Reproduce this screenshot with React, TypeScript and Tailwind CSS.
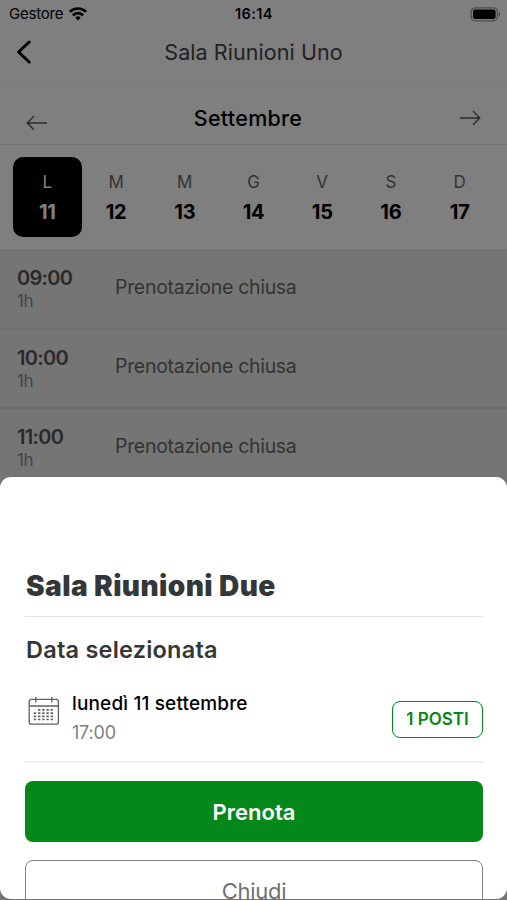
import React from 'react';
import clsx from 'clsx';

interface Day {
  label: string;
  date: number;
}

interface Slot {
  time: string;
  duration: string;
  status: string;
}

const days: Day[] = [
  { label: 'L', date: 11 },
  { label: 'M', date: 12 },
  { label: 'M', date: 13 },
  { label: 'G', date: 14 },
  { label: 'V', date: 15 },
  { label: 'S', date: 16 },
  { label: 'D', date: 17 },
];

const slots: Slot[] = [
  { time: '09:00', duration: '1h', status: 'Prenotazione chiusa' },
  { time: '10:00', duration: '1h', status: 'Prenotazione chiusa' },
  { time: '11:00', duration: '1h', status: 'Prenotazione chiusa' },
];

const WifiIcon = () => (
  <svg width="18" height="14" viewBox="0 0 18 14" fill="none" stroke="#000" strokeWidth="2.7">
    <path d="M.9 4.8a11.6 11.6 0 0 1 16.2 0" />
    <path d="M3.8 8.2a7.4 7.4 0 0 1 10.4 0" />
    <path d="M6.3 10.7a3.8 3.8 0 0 1 5.4 0L9 13.4z" fill="#000" stroke="none" />
  </svg>
);

const BatteryIcon = () => (
  <svg width="31" height="15" viewBox="0 0 31 15" fill="none">
    <rect x="1.2" y="0.8" width="26.2" height="13" rx="4" stroke="#000" strokeOpacity="0.4" strokeWidth="1.3" />
    <rect x="3" y="2.6" width="22.6" height="9.4" rx="2.2" fill="#000" />
    <path d="M28.8 5v4.6c1.5-.5 1.5-4.1 0-4.6z" fill="#000" fillOpacity="0.5" />
  </svg>
);

const ArrowIcon = ({ className }: { className?: string }) => (
  <svg className={className} width="22" height="16" viewBox="0 0 22 16" fill="none" stroke="#555" strokeWidth="1.3">
    <path d="M21 8H1.2M8 1L1.2 8L8 15" />
  </svg>
);

const CalendarIcon = () => (
  <svg width="32" height="28" viewBox="0 0 32 28" fill="none" stroke="#606060" strokeWidth="1.3">
    <rect x="1.2" y="2.4" width="29.2" height="24.8" rx="2.2" />
    <path d="M1.2 9h29.2M7.8 0v5.6M23.8 0v5.6" />
    <path d="M10 12.9h16.8M5.8 16.1h21M5.8 19.3h21M5.8 22.5h21" strokeWidth="1.7" strokeDasharray="2.4 1.8" />
  </svg>
);

const StatusBar = () => (
  <div className="grid h-7 grid-cols-3 items-center pl-[9px] pr-[6px]">
    <div className="flex items-center gap-[6px] text-[15px] tracking-[-0.2px]">
      Gestore
      <WifiIcon />
    </div>
    <div className="pr-[2px] text-center text-[14.5px] font-semibold tracking-[0.4px]">16:14</div>
    <div className="flex justify-end">
      <BatteryIcon />
    </div>
  </div>
);

const DayCell = ({ day, selected }: { day: Day; selected: boolean }) => (
  <div
    className={clsx(
      'flex h-20 w-[69px] flex-col items-center rounded-[10px] pt-[14px]',
      selected ? 'bg-black text-white' : 'text-black',
    )}
  >
    <span className={clsx('text-[17px] leading-[23px]', !selected && 'text-[#666]')}>{day.label}</span>
    <span className="mt-[5px] text-[20px] leading-[26px] font-bold tracking-[-0.2px]">{day.date}</span>
  </div>
);

const SlotRow = ({ slot }: { slot: Slot }) => (
  <div className="flex h-[79.5px] border-b-2 border-[#dcdcdc] bg-[#ebebeb] pl-[17px]">
    <div className="w-[98px] pt-[16px]">
      <div className="text-[20px] leading-6 font-semibold tracking-[-0.7px] text-[#555]">{slot.time}</div>
      <div className="text-[17px] leading-[22px] tracking-[-0.3px] text-[#888]">{slot.duration}</div>
    </div>
    <div className="pt-[24.5px] text-[19.5px] leading-6 tracking-[-0.3px] text-[#666]">{slot.status}</div>
  </div>
);

const BookingSheet = () => (
  <div className="absolute inset-x-0 top-[477px] flex h-[422px] flex-col overflow-hidden rounded-[11px] bg-white pl-[25px] pr-[24px] pt-[91px]">
    <h2 className="pl-px text-[28px] leading-9 font-black tracking-[0.42px] text-[#343739]">Sala Riunioni Due</h2>
    <div className="mt-[12px] h-px shrink-0 bg-[#e2e2e2]" />
    <h3 className="mt-[17px] pl-px text-[23.5px] leading-8 font-semibold tracking-[0.22px] text-[#343739]">
      Data selezionata
    </h3>
    <div className="mt-[25px] flex h-[54px] shrink-0">
      <div className="w-[47px] pl-[3px] pt-[6px]">
        <CalendarIcon />
      </div>
      <div className="grow pt-px">
        <div className="text-[19px] leading-6 font-medium tracking-[0.15px] text-black">lunedì 11 settembre</div>
        <div className="mt-[5px] text-[18px] leading-6 tracking-[-0.2px] text-[#808080]">17:00</div>
      </div>
      <div className="mt-[10px] flex h-[37px] w-[91px] items-center justify-center rounded-lg border-[1.5px] border-[#008817] text-[17px] font-semibold text-[#008817]">
        1 POSTI
      </div>
    </div>
    <div className="mt-[16px] h-[2px] shrink-0 bg-[#f0f0f0]" />
    <button className="mt-[18px] h-[61px] shrink-0 rounded-lg bg-[#048819] pt-px text-[22px] font-semibold text-white">
      Prenota
    </button>
    <button className="mt-[18px] h-[62px] shrink-0 rounded-lg border-[1.5px] border-[#808080] pt-px text-[22px] tracking-[-0.3px] text-[#707070]">
      Chiudi
    </button>
  </div>
);

export default function App() {
  const selectedDate = 11;

  return (
    <div className="relative h-[900px] w-[507px] overflow-hidden bg-white font-['Inter',sans-serif]">
      <StatusBar />
      <header className="relative flex h-[58px] justify-center border-b border-[#f4f4f4] pt-[8px]">
        <svg
          className="absolute left-4 top-[12px]"
          width="16"
          height="24"
          viewBox="0 0 16 24"
          fill="none"
          stroke="#000"
          strokeWidth="3"
          strokeLinecap="round"
          strokeLinejoin="round"
        >
          <path d="M13.2 2L2.6 12L13.2 22" />
        </svg>
        <h1 className="text-[21.5px] leading-8 tracking-[0.06px] text-[#444]">Sala Riunioni Uno</h1>
      </header>
      <div className="flex h-[59px] items-start justify-between border-b border-[#e2e2e2] pl-[26px] pr-[26px]">
        <ArrowIcon className="mt-[29px]" />
        <div className="pt-[16px] pr-[11px] text-[21.5px] leading-8 font-medium tracking-[0.28px] text-black">
          Settembre
        </div>
        <ArrowIcon className="mt-[24px] rotate-180" />
      </div>
      <div className="flex h-[104px] justify-between px-[13px] pt-[12px]">
        {days.map((day) => (
          <DayCell key={day.date} day={day} selected={day.date === selectedDate} />
        ))}
      </div>
      <div className="h-[651px] bg-[#ebebeb] pt-px">
        {slots.map((slot) => (
          <SlotRow key={slot.time} slot={slot} />
        ))}
      </div>
      <div className="absolute inset-0 bg-black/50" />
      <BookingSheet />
    </div>
  );
}
